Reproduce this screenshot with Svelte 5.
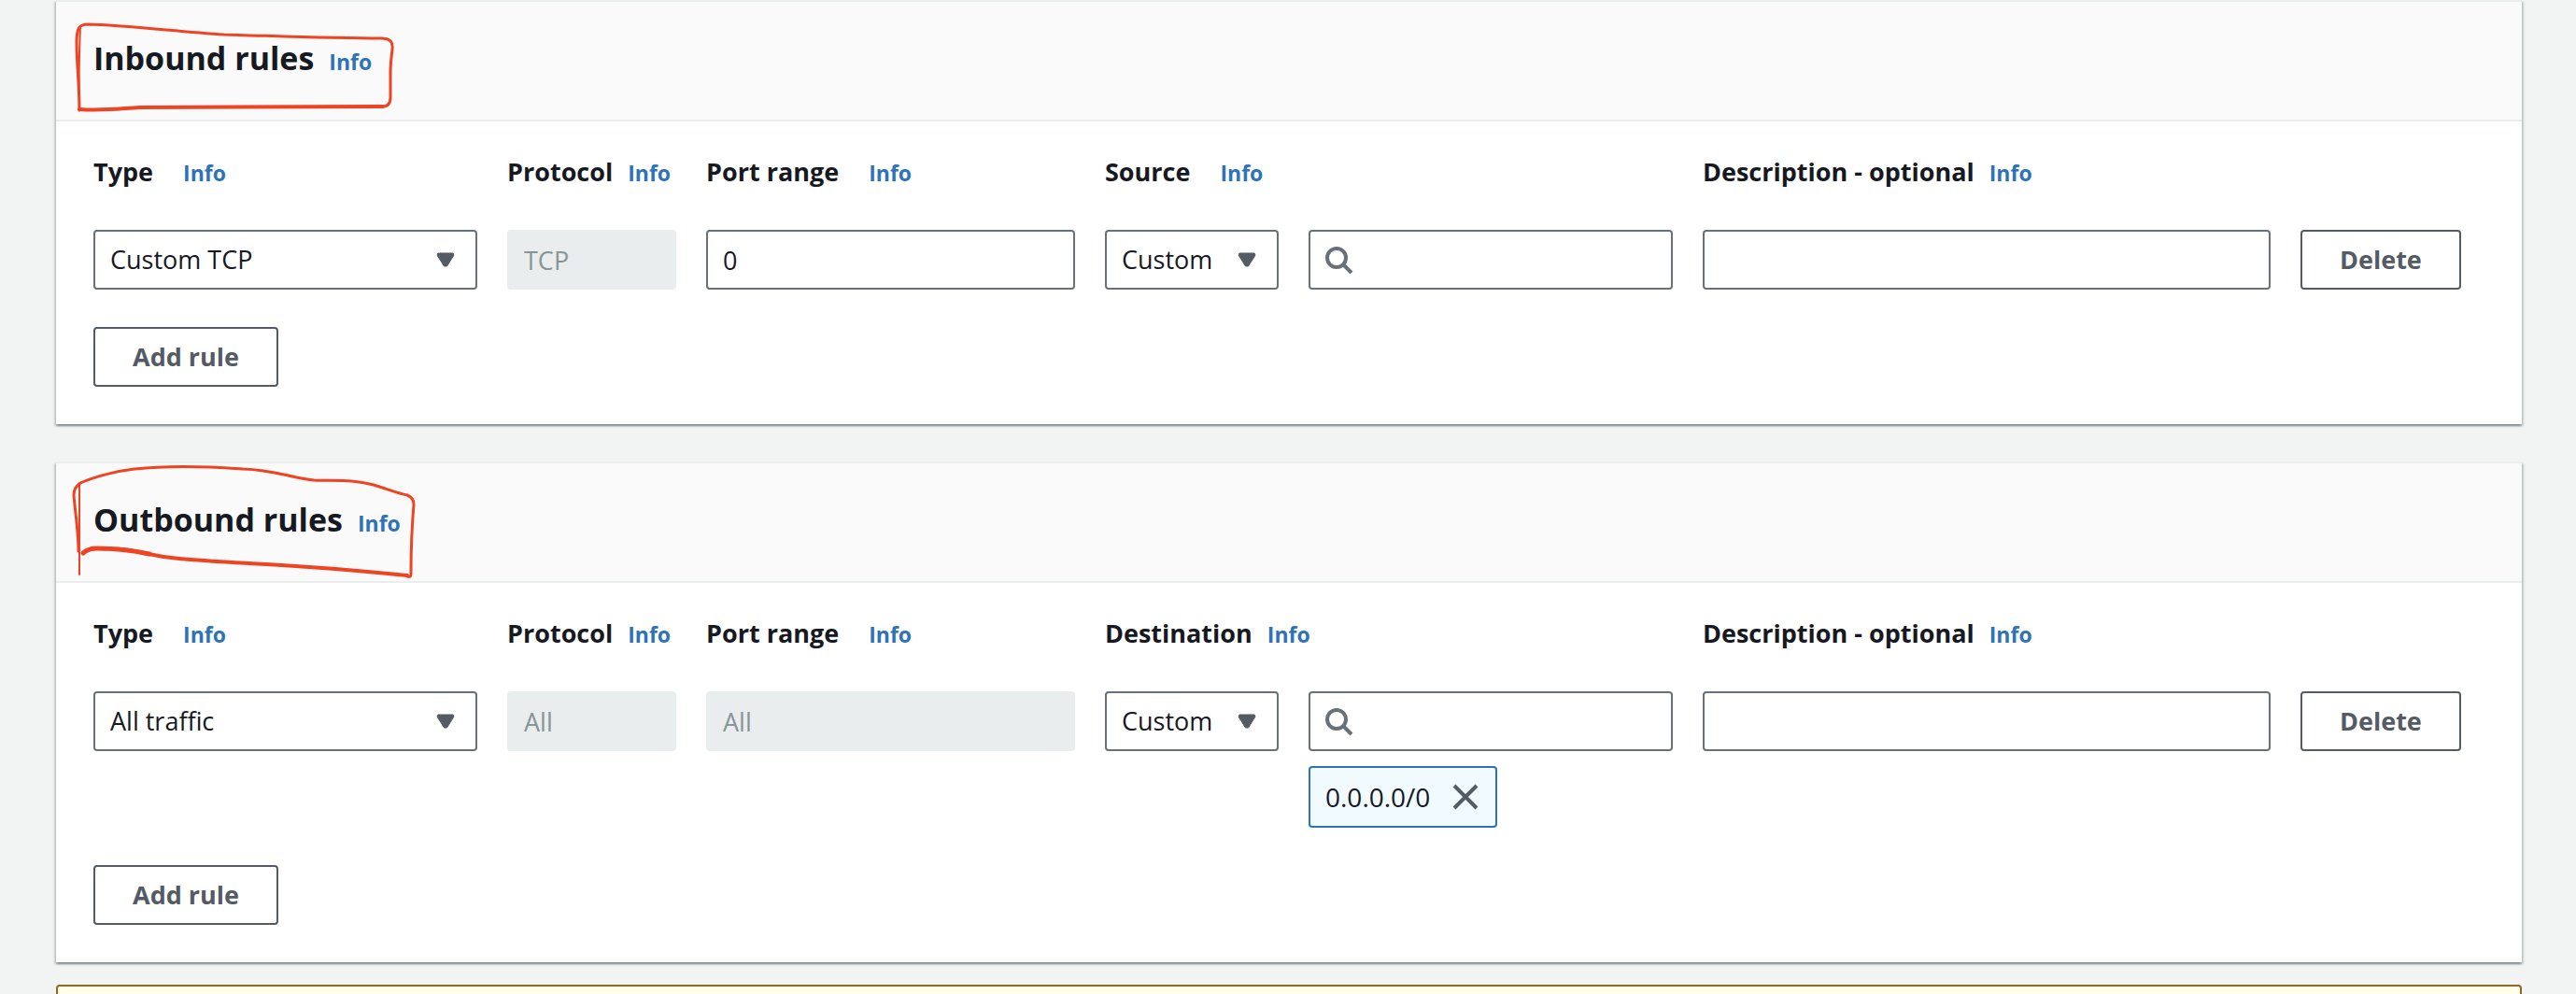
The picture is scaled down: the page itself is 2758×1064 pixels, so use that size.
<script>
  const groups = [
    {
      id: 'inbound',
      title: 'Inbound rules',
      peer: 'Source',
      peerWide: true,
      type: 'Custom TCP',
      protocol: 'TCP',
      port: '0',
      portLocked: false,
      token: '',
      strokes: [
        { w: 3, d: 'M25 118C25 92 22 66 22 45C22 30 25 26 34 26C72 27 124 33 180 37C222 38 290 41 348 41C358 41 361 45 360 53C359 61 358 68 358 78V104C358 111 355 114 350 114' },
        { w: 2, d: 'M26 28C25 50 24 70 25 118' },
        { w: 4, d: 'M25 117C50 119 70 116 90 115C170 114 260 115 350 114' },
      ],
    },
    {
      id: 'outbound',
      title: 'Outbound rules',
      peer: 'Destination',
      peerWide: false,
      type: 'All traffic',
      protocol: 'All',
      port: 'All',
      portLocked: true,
      token: '0.0.0.0/0',
      strokes: [
        { w: 2, d: 'M25 24V121' },
        { w: 3, d: 'M24 96C24 75 20 50 19 36C19 30 21 27 26 23C42 16 66 10 84 8C120 4 160 5 200 8C235 9 248 17 276 20C300 21 316 19 340 25C356 30 366 34 376 36C381 38 383 41 383 46C381 70 380 94 380 120C380 123 379 124 376 123' },
        { w: 4, d: 'M29 98C33 94 38 93 44 93C90 93 90 100 132 104C200 110 260 110 376 122' },
        { w: 5, d: 'M29 98C33 94 38 93 44 93C68 93 86 96 100 99' },
      ],
    },
  ];
</script>

{#snippet info()}<a class="info" href="#info">Info</a>{/snippet}

{#snippet arrow()}
  <svg class="arrow" viewBox="0 0 20 16" aria-hidden="true">
    <path d="M2 1H18L19 3L11.500 15H8.500L1 3Z" />
  </svg>
{/snippet}

<main>
  {#each groups as g}
    <section class="card" aria-labelledby="{g.id}-title">
      <header>
        <h2 id="{g.id}-title">{g.title}</h2>
        {@render info()}
        <svg class="marker" viewBox="0 0 400 130" aria-hidden="true">
          {#each g.strokes as s}<path d={s.d} stroke-width={s.w} />{/each}
        </svg>
      </header>
      <div class="body">
        <div class="rules">
          <div class="head wide"><label for="{g.id}-type">Type</label>{@render info()}</div>
          <div class="head"><label for="{g.id}-protocol">Protocol</label>{@render info()}</div>
          <div class="head wide"><label for="{g.id}-port">Port range</label>{@render info()}</div>
          <div class="head span" class:wide={g.peerWide}>
            <label for="{g.id}-peer">{g.peer}</label>{@render info()}
          </div>
          <div class="head span"><label for="{g.id}-desc">Description - optional</label>{@render info()}</div>

          <div class="control">
            <select id="{g.id}-type"><option>{g.type}</option></select>
            {@render arrow()}
          </div>
          <div class="control"><input id="{g.id}-protocol" type="text" value={g.protocol} disabled /></div>
          <div class="control"><input id="{g.id}-port" type="text" value={g.port} disabled={g.portLocked} /></div>
          <div class="control">
            <select id="{g.id}-peer"><option>Custom</option></select>
            {@render arrow()}
          </div>
          <div class="lookup">
            <div class="control">
              <input class="search" type="search" aria-label="{g.peer} search" />
              <svg class="lens" viewBox="0 0 32 32" aria-hidden="true">
                <circle cx="13" cy="13" r="10" />
                <path d="M20 20L29 29" />
              </svg>
            </div>
            {#if g.token}
              <div class="token">
                <span>{g.token}</span>
                <button class="remove" type="button" aria-label="Remove {g.token}">
                  <svg viewBox="0 0 28 28" aria-hidden="true"><path d="M2 2L26 26M26 2L2 26" /></svg>
                </button>
              </div>
            {/if}
          </div>
          <div class="control"><input id="{g.id}-desc" type="text" /></div>
          <div><button class="btn" type="button">Delete</button></div>
        </div>
        <button class="btn" type="button">Add rule</button>
      </div>
    </section>
  {/each}
  <div class="alert" role="status"></div>
</main>

<style>
  :global(body) {
    background: #f2f3f3;
  }
  :global(html) {
    overflow: hidden;
  }
  main {
    height: 100vh;
    overflow: hidden;
    box-sizing: border-box;
    padding: 0 58px 0 60px;
    color: #16191f;
    font-family: 'Open Sans', 'Noto Sans', sans-serif;
    font-size: 27px;
    line-height: 44px;
  }
  .card {
    margin-bottom: 40px;
    background: #fff;
    border-top: 2px solid #eaeded;
    box-shadow:
      0 2px 2px 0 rgba(0, 28, 36, 0.3),
      2px 2px 2px 0 rgba(0, 28, 36, 0.15),
      -2px 2px 2px 0 rgba(0, 28, 36, 0.15);
  }
  .card:nth-of-type(2) {
    margin-bottom: 24px;
  }
  header {
    position: relative;
    display: flex;
    align-items: baseline;
    gap: 16px;
    padding: 38px 40px 44px;
    background: #fafafa;
    border-bottom: 2px solid #eaeded;
  }
  h2 {
    margin: 0;
    font-size: 34px;
    font-weight: 700;
    line-height: 44px;
  }
  .info {
    color: #2e73b8;
    font-size: 23px;
    font-weight: 700;
    line-height: 32px;
    text-decoration: none;
  }
  .marker {
    position: absolute;
    left: 0;
    top: -2px;
    width: 400px;
    height: 130px;
    fill: none;
    stroke: #ee4423;
    stroke-linecap: round;
    stroke-linejoin: round;
    pointer-events: none;
  }
  .body {
    padding: 32px 40px 40px;
  }
  .rules {
    display: grid;
    grid-template-columns:
      minmax(0, 411fr) minmax(0, 181fr) minmax(0, 395fr) minmax(0, 186fr)
      minmax(0, 390fr) minmax(0, 608fr) minmax(0, 197fr);
    gap: 40px 32px;
    margin-bottom: 40px;
  }
  .head {
    display: flex;
    align-items: baseline;
    gap: 16px;
    white-space: nowrap;
    font-weight: 700;
  }
  .wide {
    gap: 32px;
  }
  .span {
    grid-column: span 2;
  }
  .control {
    position: relative;
    height: 64px;
  }
  input,
  select {
    display: block;
    box-sizing: border-box;
    width: 100%;
    height: 64px;
    margin: 0;
    padding: 0 16px;
    appearance: none;
    background: #fff;
    border: 2px solid #687078;
    border-radius: 4px;
    color: inherit;
    font: inherit;
  }
  input:disabled {
    background: #eaeded;
    border-color: #eaeded;
    color: #879596;
  }
  .search {
    padding-left: 60px;
  }
  .arrow {
    position: absolute;
    right: 24px;
    top: 24px;
    width: 20px;
    height: 16px;
    fill: #545b64;
    stroke: #545b64;
    stroke-width: 1;
    stroke-linejoin: round;
    pointer-events: none;
  }
  .lens {
    position: absolute;
    left: 17px;
    top: 17px;
    width: 32px;
    height: 32px;
    fill: none;
    stroke: #687078;
    stroke-width: 4;
    pointer-events: none;
  }
  .token {
    display: inline-flex;
    align-items: center;
    gap: 24px;
    box-sizing: border-box;
    height: 66px;
    margin-top: 16px;
    padding: 0 18px 0 16px;
    background: #f1faff;
    border: 2px solid #2e73b8;
    border-radius: 4px;
    font-size: 28px;
  }
  .lookup {
    display: flex;
    flex-direction: column;
    align-items: flex-start;
  }
  .lookup .control {
    width: 100%;
  }
  .remove {
    display: flex;
    padding: 0;
    background: none;
    border: 0;
  }
  .remove svg {
    width: 28px;
    height: 28px;
    fill: none;
    stroke: #545b64;
    stroke-width: 4;
  }
  .btn {
    display: block;
    height: 64px;
    padding: 0 40px;
    background: #fff;
    border: 2px solid #545b64;
    border-radius: 4px;
    color: #545b64;
    font: inherit;
    font-weight: 700;
    white-space: nowrap;
  }
  .alert {
    box-sizing: border-box;
    height: 96px;
    background: #fffeeb;
    border: 2px solid #8d6924;
    border-radius: 4px;
  }
</style>
